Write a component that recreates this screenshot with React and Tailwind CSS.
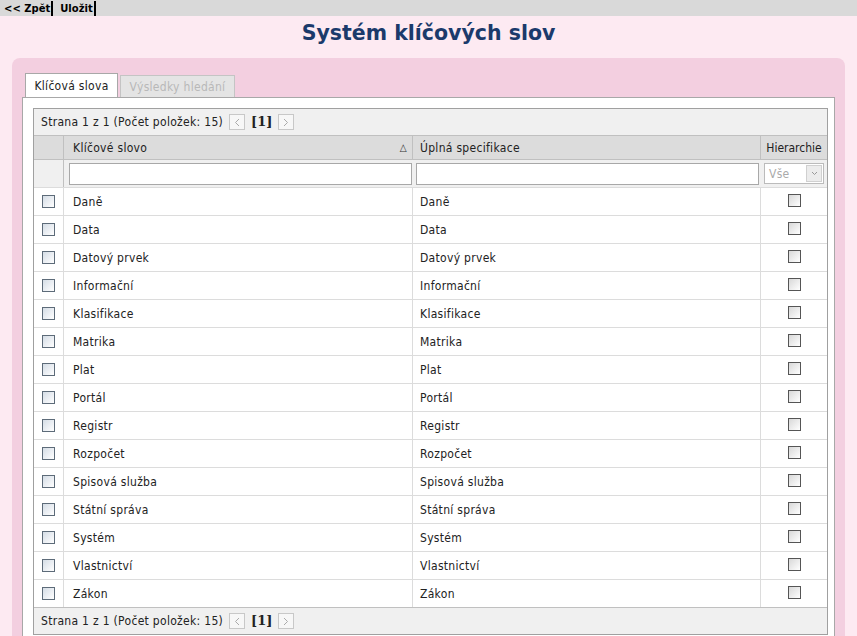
const rows = [
  "Daně",
  "Data",
  "Datový prvek",
  "Informační",
  "Klasifikace",
  "Matrika",
  "Plat",
  "Portál",
  "Registr",
  "Rozpočet",
  "Spisová služba",
  "Státní správa",
  "Systém",
  "Vlastnictví",
  "Zákon",
]

function Pager() {
  return (
    <div className="h-[26px] flex items-center pl-[7px] bg-[#f0f0f0] text-[12px] text-[#222]">
      <span>Strana 1 z 1 (Počet položek: 15)</span>
      <span className="ml-[6px] w-[16px] h-[16px] border border-[#c8c8c8] bg-[#f7f7f7] flex items-center justify-center">
        <svg width="6" height="9" viewBox="0 0 6 9"><path d="M5 1 L1.5 4.5 L5 8" fill="none" stroke="#aaa" strokeWidth="1" /></svg>
      </span>
      <span className="ml-[6px] font-bold text-[13px] tracking-normal" style={{ fontFamily: "'DejaVu Serif', serif" }}>[1]</span>
      <span className="ml-[6px] w-[16px] h-[16px] border border-[#c8c8c8] bg-[#f7f7f7] flex items-center justify-center">
        <svg width="6" height="9" viewBox="0 0 6 9"><path d="M1 1 L4.5 4.5 L1 8" fill="none" stroke="#aaa" strokeWidth="1" /></svg>
      </span>
    </div>
  )
}

function Box({ dark }) {
  return (
    <span
      className={
        dark
          ? "block w-[13px] h-[13px] border border-[#555] bg-gradient-to-br from-[#d8d8d8] to-white"
          : "block w-[13px] h-[13px] border border-[#5d6b79] bg-gradient-to-br from-[#d5dde6] to-white"
      }
    />
  )
}

export default function App() {
  return (
    <div className="w-[857px] h-[636px] overflow-hidden bg-[#fdeaf2] tracking-[0.3px]" style={{ fontFamily: "'DejaVu Sans Condensed', 'DejaVu Sans', sans-serif" }}>
      {/* toolbar */}
      <div className="h-[16px] bg-[#d9d9d9] flex items-center pl-[4px] text-[10px] font-bold text-black tracking-normal" style={{ fontFamily: "'DejaVu Sans', sans-serif" }}>
        <span className="pr-[1px] border-r-2 border-black leading-[15px]">&lt;&lt; Zpět</span>
        <span className="pl-[7px] pr-[1px] border-r-2 border-black leading-[15px]">Uložit</span>
      </div>

      {/* title */}
      <div className="h-[42px] flex items-center justify-center pb-[7px]">
        <h1 className="text-[20.5px] font-bold text-[#1b3a6b] tracking-normal" style={{ fontFamily: "'DejaVu Sans', sans-serif" }}>
          Systém klíčových slov
        </h1>
      </div>

      {/* panel */}
      <div className="ml-[12px] w-[833px] bg-[#f3cfe0] rounded-t-[8px] pt-[16px] pl-[10px] pr-[10px] h-[600px]">
        <div className="flex items-end pl-[3px] h-[23px]">
          <div className="h-[24px] w-[93px] bg-white border border-b-0 border-[#a8a8a8] flex items-center justify-center text-[12px] text-[#222] relative z-10">
            Klíčová slova
          </div>
          <div className="ml-[2px] h-[22px] w-[115px] bg-[#e4e4e4] border border-b-0 border-[#c4c4c4] flex items-center justify-center text-[12px] text-[#b8b8b8]">
            Výsledky hledání
          </div>
        </div>
        <div className="bg-white border border-[#a8a8a8] pt-[10px] pl-[10px] pr-[6px] h-[560px]">
          <div className="w-[795px] border border-[#a0a0a0] text-[12px] text-[#222]">
            <Pager />
            {/* header */}
            <div className="flex h-[24px] bg-[#dcdcdc] border-t border-[#c0c0c0]">
              <div className="w-[30px] border-r border-[#c0c0c0]" />
              <div className="w-[349px] border-r border-[#c0c0c0] flex items-center pl-[9px] pr-[5px] justify-between">
                <span>Klíčové slovo</span>
                <span className="text-[10px] text-[#333]">△</span>
              </div>
              <div className="w-[348px] border-r border-[#c0c0c0] flex items-center pl-[7px]">Úplná specifikace</div>
              <div className="flex-1 flex items-center justify-center tracking-normal">Hierarchie</div>
            </div>
            {/* filter */}
            <div className="flex h-[28px] bg-[#f0f0f0] border-t border-[#c0c0c0]">
              <div className="w-[30px] border-r border-[#c0c0c0]" />
              <div className="w-[349px] flex items-center pl-[5px]">
                <div className="w-[343px] h-[22px] bg-white border border-[#a8a8a8]" />
              </div>
              <div className="w-[348px] flex items-center pl-[3px]">
                <div className="w-[343px] h-[22px] bg-white border border-[#a8a8a8]" />
              </div>
              <div className="flex-1 flex items-center pl-[3px]">
                <div className="w-[60px] h-[21px] bg-white border border-[#bbb] flex items-center justify-between pl-[4px] pr-[1px] text-[#aaa]">
                  <span>Vše</span>
                  <span className="w-[16px] h-[17px] bg-[#ececec] border border-[#d0d0d0] flex items-center justify-center">
                    <svg width="7" height="5" viewBox="0 0 7 5"><path d="M1 1 L3.5 3.5 L6 1" fill="none" stroke="#999" strokeWidth="1" /></svg>
                  </span>
                </div>
              </div>
            </div>
            {/* rows */}
            {rows.map(r => (
              <div key={r} className="flex h-[28px] bg-white border-t border-[#dcdcdc]">
                <div className="w-[30px] border-r border-[#dcdcdc] flex items-center justify-center">
                  <Box />
                </div>
                <div className="w-[349px] border-r border-[#dcdcdc] flex items-center pl-[9px]">{r}</div>
                <div className="w-[348px] border-r border-[#dcdcdc] flex items-center pl-[7px]">{r}</div>
                <div className="flex-1 flex items-center justify-center pb-[2px]">
                  <Box dark />
                </div>
              </div>
            ))}
            <div className="border-t border-[#c0c0c0]">
              <Pager />
            </div>
          </div>
        </div>
      </div>
    </div>
  )
}
